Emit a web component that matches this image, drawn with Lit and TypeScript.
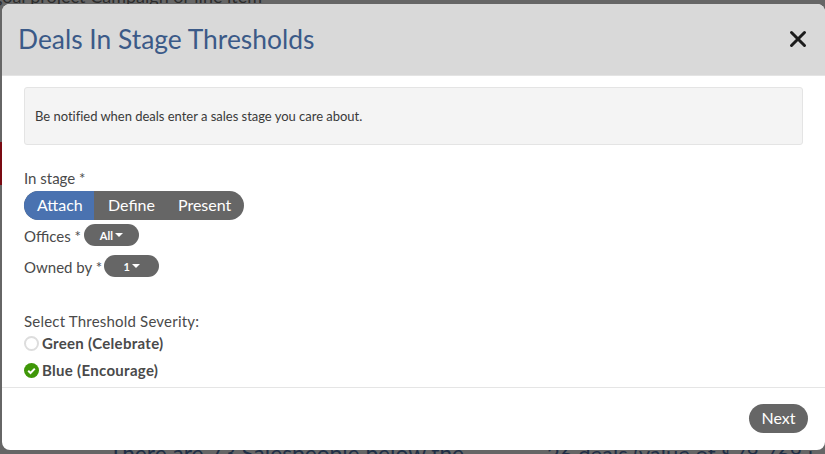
import { LitElement, html, css } from "lit";
import { customElement } from "lit/decorators.js";

@customElement("app-root")
export class AppRoot extends LitElement {
  static styles = css`
    :host {
      display: block;
      position: relative;
      width: 825px;
      height: 454px;
      overflow: hidden;
      background: #666;
      font-family: "Lato", "Open Sans", sans-serif;
      color: #444;
    }
    .bg-text {
      position: absolute;
      font-size: 22px;
      line-height: 26px;
      color: #1f2f47;
      white-space: nowrap;
    }
    .bg-top { left: -7px; top: -17px; color: #2c2c2c; font-size: 18px; }
    .bg-left { left: 109px; top: 441px; font-size: 22.7px; }
    .bg-right { left: 547px; top: 441px; }
    .bg-red { position: absolute; left: 0; top: 142px; width: 2px; height: 43px; background: #7a0a12; }
    .modal {
      position: absolute;
      left: 2px;
      top: 4px;
      width: 823px;
      height: 446px;
      background: #fff;
      border-radius: 8px;
      overflow: hidden;
      display: flex;
      flex-direction: column;
    }
    .header {
      flex: none;
      height: 72px;
      box-sizing: border-box;
      background: #d9d9d9;
      border-bottom: 1px solid #e4e4e4;
      display: flex;
      align-items: center;
      justify-content: space-between;
      padding: 0 18px 2px 17px;
    }
    h1 {
      margin: 0 0 0 -1px;
      font-size: 26.4px;
      font-weight: 400;
      color: #3b5a88;
      line-height: 32px;
    }
    .close { display: block; width: 18px; height: 18px; }
    .body {
      flex: 1;
      padding: 11px 22px 0;
      display: flex;
      flex-direction: column;
      align-items: flex-start;
      min-height: 0;
    }
    .note {
      align-self: stretch;
      height: 58px;
      box-sizing: border-box;
      background: #f4f4f4;
      border: 1px solid #e4e4e4;
      border-radius: 3px;
      padding: 0 10px;
      display: flex;
      align-items: center;
      font-size: 13px;
      letter-spacing: -0.02px;
      color: #3a3a3a;
      margin-bottom: 24px;
    }
    .label { font-size: 15px; line-height: 18px; color: #4a4a4a; }
    .seg {
      display: flex;
      height: 29px;
      border-radius: 15px;
      overflow: hidden;
      background: #666;
      color: #fff;
      font-size: 16px;
      margin-top: 4px;
      margin-bottom: 4px;
    }
    .seg span { display: flex; align-items: center; padding-bottom: 2px; box-sizing: border-box; }
    .seg .on { background: #4a72b0; width: 70px; padding-left: 13px; }
    .seg .mid { padding-left: 14px; padding-right: 11px; }
    .seg .last { padding-left: 12px; padding-right: 13px; }
    .row { display: flex; align-items: center; gap: 3px; height: 22px; }
    .row + .row { margin-top: 9px; }
    .row .label { padding-top: 2px; }
    .row .owned { margin-right: -1px; }
    .pill {
      width: 55px;
      height: 22px;
      border-radius: 11px;
      background: #666;
      color: #fff;
      font-size: 11px;
      font-weight: 700;
      display: flex;
      align-items: center;
      justify-content: center;
      gap: 2px;
    }
    .caret { width: 0; height: 0; border-left: 4px solid transparent; border-right: 4px solid transparent; border-top: 4px solid #fff; }
    .sev { margin-top: 35px; letter-spacing: 0.2px; }
    .radio {
      display: flex;
      align-items: center;
      gap: 3px;
      height: 18px;
      margin-top: 4px;
      font-size: 15px;
      font-weight: 700;
      color: #4a4a4a;
      letter-spacing: 0.3px;
    }
    .radio + .radio { margin-top: 9px; }
    .dot { width: 15px; height: 15px; box-sizing: border-box; border: 2px solid #ddd; border-radius: 50%; background: #fff; }
    .check { display: block; width: 15px; height: 15px; }
    .footer {
      flex: none;
      height: 63px;
      box-sizing: border-box;
      border-top: 1px solid #e5e5e5;
      display: flex;
      justify-content: flex-end;
      align-items: flex-start;
      padding: 16px 17px 0 0;
    }
    .next {
      width: 59px;
      height: 29px;
      border: 0;
      border-radius: 15px;
      background: #666;
      color: #fff;
      font: 16px "Lato", sans-serif;
      padding: 0 0 2px;
    }
  `;

  render() {
    return html`
      <div class="bg-text bg-top">goal project Campaign or line item</div>
      <div class="bg-red"></div>
      <div class="bg-text bg-left">There are 73 Salespeople below the</div>
      <div class="bg-text bg-right">26 deals (value of $78,768 i</div>
      <div class="modal">
        <div class="header">
          <h1>Deals In Stage Thresholds</h1>
          <svg class="close" viewBox="0 0 18 18" fill="none" stroke="#1c1c1c" stroke-width="3" stroke-linecap="round">
            <path d="M2.5 2.5 15.5 15.5M15.5 2.5 2.5 15.5" />
          </svg>
        </div>
        <div class="body">
          <div class="note">Be notified when deals enter a sales stage you care about.</div>
          <div class="label">In stage *</div>
          <div class="seg">
            <span class="on">Attach</span>
            <span class="mid">Define</span>
            <span class="last">Present</span>
          </div>
          <div class="row">
            <span class="label">Offices *</span>
            <span class="pill">All<i class="caret"></i></span>
          </div>
          <div class="row">
            <span class="label owned">Owned by *</span>
            <span class="pill">1<i class="caret"></i></span>
          </div>
          <div class="label sev">Select Threshold Severity:</div>
          <div class="radio"><span class="dot"></span>Green (Celebrate)</div>
          <div class="radio">
            <svg class="check" viewBox="0 0 15 15">
              <circle cx="7.5" cy="7.5" r="7.5" fill="#3f9708" />
              <path d="M4.2 7.8 6.5 10 10.8 5.6" fill="none" stroke="#fff" stroke-width="2" />
            </svg>
            Blue (Encourage)
          </div>
        </div>
        <div class="footer"><button class="next">Next</button></div>
      </div>
    `;
  }
}
